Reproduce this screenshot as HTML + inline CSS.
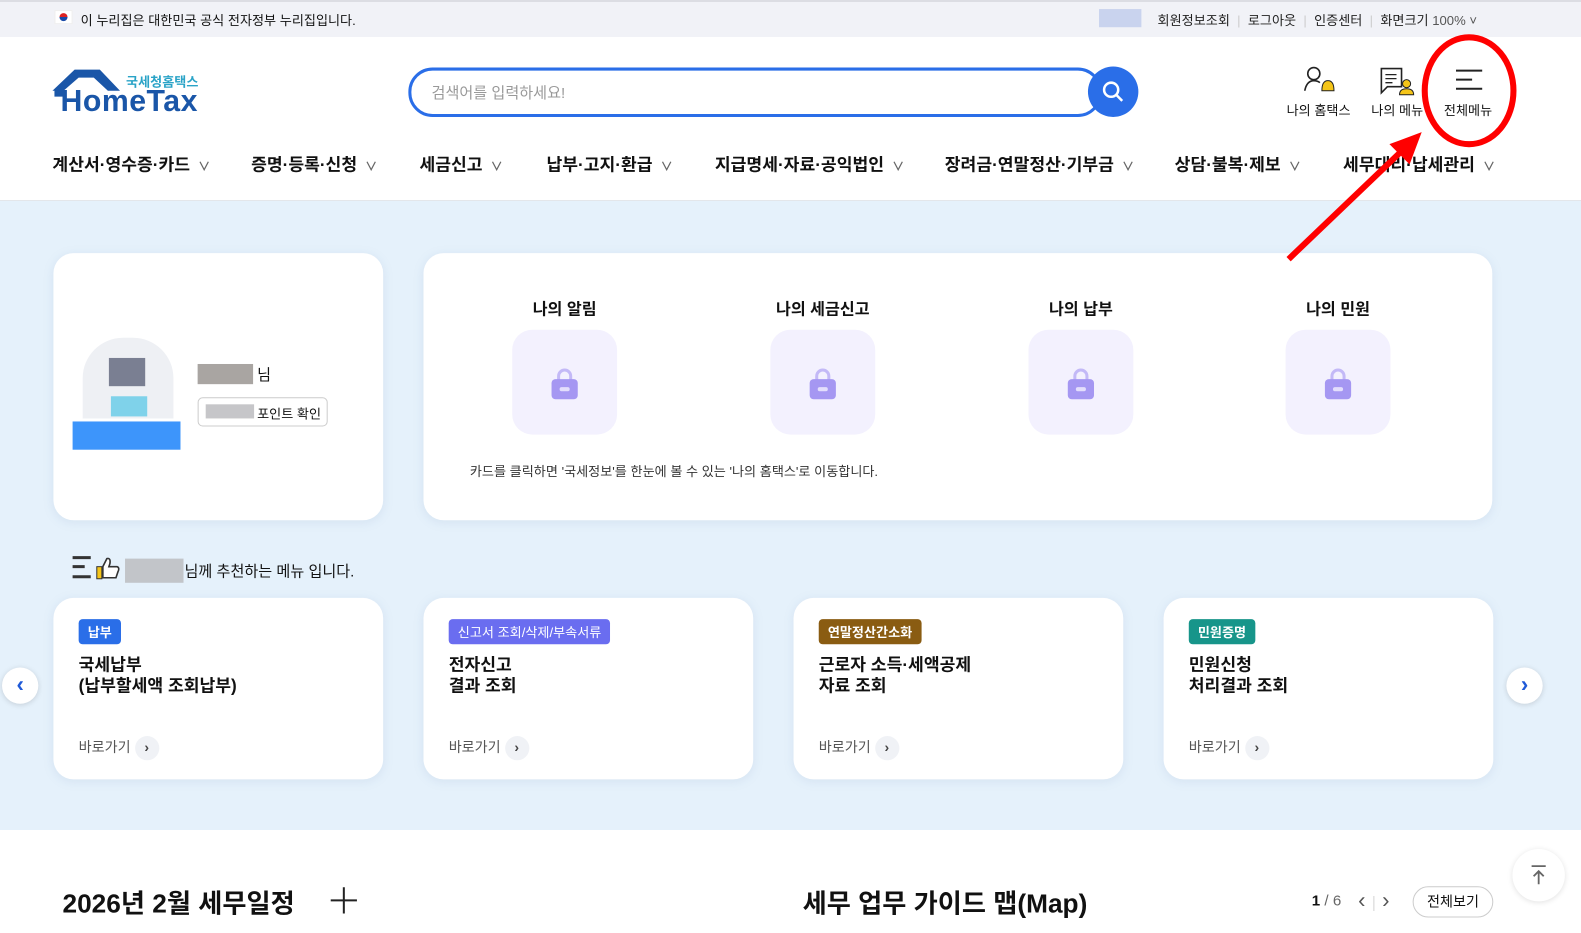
<!DOCTYPE html>
<html><head><meta charset="utf-8"><style>
*{box-sizing:border-box;margin:0;padding:0}
body{width:1581px;height:933px;overflow:hidden;font-family:"Liberation Sans","Noto Sans CJK KR",sans-serif;color:#111;background:#fff;position:relative}
#w{position:absolute;left:0;top:0;width:1568px;height:925px;transform:scale(1.0083);transform-origin:0 0}
.a{position:absolute}
.top{left:0;top:0;width:1581px;height:37px;background:#f1f2f7;border-top:2px solid #dcdde3;font-size:13px}
.nav{font-size:17px;font-weight:bold;top:149px;color:#111}
.nav span{font-size:12px;color:#666;margin-left:8px}
.bg{left:0;top:200px;width:1581px;height:622px;background:#e5f1fb;border-top:1px solid #e3e6ea}
.card{background:#fff;border-radius:20px;box-shadow:0 2px 10px rgba(120,150,190,.15)}
.lk{width:104px;height:104px;border-radius:20px;background:#f3f1fe}
.ttl{font-size:16px;font-weight:bold;text-align:center;width:200px}
.tag{font-size:13px;color:#fff;font-weight:bold;padding:3px 9px;border-radius:4px;top:21px;left:25px}
.rt{font-size:17px;font-weight:bold;top:56px;left:25px;line-height:21px}
.go{font-size:14px;color:#555;top:137px;left:25px}
.go b{display:inline-block;width:24px;height:24px;border-radius:50%;background:#f0f2f6;color:#444;text-align:center;line-height:23px;font-size:14px;margin-left:4px;vertical-align:middle}
.arr{width:36px;height:36px;border-radius:50%;background:#fff;box-shadow:0 1px 6px rgba(0,0,0,.15);color:#1f5ad8;font-size:22px;text-align:center;line-height:34px;font-weight:bold}
</style></head><body>
<div class="a top"></div>
<div class="a" style="left:0;top:200px;width:1581px;height:630px;background:#e5f1fb;border-top:1px solid #e3e6ea"></div>
<div id="w">
<div class="a" style="left:0;top:0;width:1568px;height:37px;font-size:13px">
 <div class="a" style="left:54px;top:10px;width:18px;height:14px;background:#fff;border:1px solid #eee"><div class="a" style="left:4px;top:2px;width:8px;height:8px;border-radius:50%;background:linear-gradient(#d22 50%,#1a4aa8 50%)"></div></div>
 <div class="a" style="left:80px;top:10px">이 누리집은 대한민국 공식 전자정부 누리집입니다.</div>
 <div class="a" style="left:1090px;top:9px;width:42px;height:18px;background:#c9d3ee"></div>
 <div class="a" style="left:1148px;top:10px;color:#222">회원정보조회 <span style="color:#ccc">&nbsp;|&nbsp;</span> 로그아웃 <span style="color:#ccc">&nbsp;|&nbsp;</span> 인증센터 <span style="color:#ccc">&nbsp;|&nbsp;</span> 화면크기 <span style="color:#555">100% ˅</span></div>
</div>
<!-- logo -->
<svg class="a" style="left:51px;top:68px" width="70" height="28" viewBox="0 0 70 28"><path d="M1 22 L23 1 L48 1 L68 22 L56 22 L42 9 L27 9 L12 22 L12 28 L3 28 L3 22 Z" fill="#1a56a8"/></svg>
<div class="a" style="left:125px;top:71px;font-size:13px;font-weight:bold;color:#2aa3c7">국세청홈택스</div>
<div class="a" style="left:60px;top:84px;font-size:30px;font-weight:bold;color:#1a56a8;letter-spacing:0.5px">HomeTax</div>
<!-- search -->
<div class="a" style="left:405px;top:67px;width:688px;height:49px;border:3px solid #2a6ee8;border-radius:24px;padding:11px 20px;font-size:15px;color:#999">검색어를 입력하세요!</div>
<div class="a" style="left:1079px;top:66px;width:50px;height:50px;border-radius:50%;background:#2a6ee8"></div>
<svg class="a" style="left:1092px;top:79px" width="24" height="24" viewBox="0 0 24 24"><circle cx="10" cy="10" r="7" fill="none" stroke="#fff" stroke-width="2.5"/><path d="M15 15 L21 21" stroke="#fff" stroke-width="2.5"/></svg>
<!-- icons -->
<svg class="a" style="left:1292px;top:64px" width="36" height="30" viewBox="0 0 36 30"><circle cx="11" cy="9" r="6" fill="none" stroke="#222" stroke-width="1.6"/><path d="M2 26 Q4 16 11 16 Q15 16 17 18" fill="none" stroke="#222" stroke-width="1.6"/><path d="M19 26 Q19 16 25 16 Q31 16 31 26 Z" fill="#f5c518" stroke="#222" stroke-width="1"/></svg>
<div class="a" style="left:1276px;top:99px;font-size:13px">나의 홈택스</div>
<svg class="a" style="left:1368px;top:66px" width="38" height="30" viewBox="0 0 38 30"><path d="M2 2 H22 V20 H8 L2 26 Z" fill="none" stroke="#222" stroke-width="1.6"/><path d="M6 8 H17 M6 12 H17 M6 16 H13" stroke="#222" stroke-width="1.3"/><circle cx="27" cy="17" r="4" fill="#f5c518" stroke="#222"/><path d="M20 28 Q20 22 27 22 Q34 22 34 28 Z" fill="#f5c518" stroke="#222"/></svg>
<div class="a" style="left:1360px;top:99px;font-size:13px">나의 메뉴</div>
<svg class="a" style="left:1443px;top:68px" width="28" height="22"><path d="M1 2 H27 M1 11 H17 M1 20 H27" stroke="#222" stroke-width="2"/></svg>
<div class="a" style="left:1432px;top:99px;font-size:13px">전체메뉴</div>
<!-- nav -->
<div class="a nav" style="left:52px">계산서·영수증·카드<span>∨</span></div>
<div class="a nav" style="left:249px">증명·등록·신청<span>∨</span></div>
<div class="a nav" style="left:416px">세금신고<span>∨</span></div>
<div class="a nav" style="left:542px">납부·고지·환급<span>∨</span></div>
<div class="a nav" style="left:709px">지급명세·자료·공익법인<span>∨</span></div>
<div class="a nav" style="left:937px">장려금·연말정산·기부금<span>∨</span></div>
<div class="a nav" style="left:1165px">상담·불복·제보<span>∨</span></div>
<div class="a nav" style="left:1332px">세무대리·납세관리<span>∨</span></div>
<!-- profile -->
<div class="a card" style="left:53px;top:251px;width:327px;height:265px"></div>
<div class="a" style="left:82px;top:335px;width:90px;height:80px;border-radius:40px 40px 0 0;background:#eef0f4"></div>
<div class="a" style="left:108px;top:355px;width:36px;height:28px;background:#7a7f92"></div>
<div class="a" style="left:110px;top:393px;width:36px;height:20px;background:#7fd2ea"></div>
<div class="a" style="left:72px;top:418px;width:107px;height:28px;background:#3d95fb"></div>
<div class="a" style="left:196px;top:361px;width:55px;height:20px;background:#a9a5a2"></div>
<div class="a" style="left:255px;top:361px;font-size:15px">님</div>
<div class="a" style="left:196px;top:394px;width:129px;height:29px;border:1px solid #ccc;border-radius:5px;background:#fff;font-size:13px;padding:5px 0 0 58px">포인트 확인</div>
<div class="a" style="left:204px;top:401px;width:48px;height:14px;background:#c6c6c9"></div>
<!-- my card -->
<div class="a card" style="left:420px;top:251px;width:1060px;height:265px"></div>
<div class="a ttl" style="left:460px;top:293px">나의 알림</div>
<div class="a ttl" style="left:716px;top:293px">나의 세금신고</div>
<div class="a ttl" style="left:972px;top:293px">나의 납부</div>
<div class="a ttl" style="left:1227px;top:293px">나의 민원</div>
<div class="a lk" style="left:508px;top:327px"></div>
<div class="a lk" style="left:764px;top:327px"></div>
<div class="a lk" style="left:1020px;top:327px"></div>
<div class="a lk" style="left:1275px;top:327px"></div>
<svg class="a" style="left:545px;top:364px" width="30" height="34"><path d="M9 13 V9 a6 6 0 0 1 12 0 V13" fill="none" stroke="#c3b9f7" stroke-width="3"/><rect x="2" y="12" width="26" height="20" rx="4" fill="#a597f2"/><rect x="10" y="20" width="10" height="4" rx="2" fill="#e3defc"/></svg>
<svg class="a" style="left:801px;top:364px" width="30" height="34"><path d="M9 13 V9 a6 6 0 0 1 12 0 V13" fill="none" stroke="#c3b9f7" stroke-width="3"/><rect x="2" y="12" width="26" height="20" rx="4" fill="#a597f2"/><rect x="10" y="20" width="10" height="4" rx="2" fill="#e3defc"/></svg>
<svg class="a" style="left:1057px;top:364px" width="30" height="34"><path d="M9 13 V9 a6 6 0 0 1 12 0 V13" fill="none" stroke="#c3b9f7" stroke-width="3"/><rect x="2" y="12" width="26" height="20" rx="4" fill="#a597f2"/><rect x="10" y="20" width="10" height="4" rx="2" fill="#e3defc"/></svg>
<svg class="a" style="left:1312px;top:364px" width="30" height="34"><path d="M9 13 V9 a6 6 0 0 1 12 0 V13" fill="none" stroke="#c3b9f7" stroke-width="3"/><rect x="2" y="12" width="26" height="20" rx="4" fill="#a597f2"/><rect x="10" y="20" width="10" height="4" rx="2" fill="#e3defc"/></svg>
<div class="a" style="left:466px;top:457px;font-size:13px;color:#333">카드를 클릭하면 '국세정보'를 한눈에 볼 수 있는 '나의 홈택스'로 이동합니다.</div>
<!-- recommend -->
<svg class="a" style="left:70px;top:550px" width="52" height="26"><path d="M2 3 H20 M2 12 H14 M2 22 H20" stroke="#333" stroke-width="3"/><rect x="26" y="12" width="5" height="12" fill="#f5c518" stroke="#333"/><path d="M32 12 L36 4 Q40 3 39 9 L38 12 H46 Q49 13 47 17 L45 23 H32 Z" fill="#fff" stroke="#333" stroke-width="1.6"/></svg>
<div class="a" style="left:124px;top:554px;width:58px;height:24px;background:#b9babd;opacity:.8"></div>
<div class="a" style="left:183px;top:556px;font-size:15px">님께 추천하는 메뉴 입니다.</div>
<div class="a card" style="left:53px;top:593px;width:327px;height:180px"><div class="a tag" style="background:#2a6ee8">납부</div><div class="a rt">국세납부<br>(납부할세액 조회납부)</div><div class="a go">바로가기<b>›</b></div></div>
<div class="a card" style="left:420px;top:593px;width:327px;height:180px"><div class="a tag" style="background:#6a6df0;font-weight:normal">신고서 조회/삭제/부속서류</div><div class="a rt">전자신고<br>결과 조회</div><div class="a go">바로가기<b>›</b></div></div>
<div class="a card" style="left:787px;top:593px;width:327px;height:180px"><div class="a tag" style="background:#8a5c12">연말정산간소화</div><div class="a rt">근로자 소득·세액공제<br>자료 조회</div><div class="a go">바로가기<b>›</b></div></div>
<div class="a card" style="left:1154px;top:593px;width:327px;height:180px"><div class="a tag" style="background:#17958a">민원증명</div><div class="a rt">민원신청<br>처리결과 조회</div><div class="a go">바로가기<b>›</b></div></div>
<div class="a arr" style="left:2px;top:662px">‹</div>
<div class="a arr" style="left:1494px;top:662px">›</div>
<!-- bottom -->
<div class="a" style="left:62px;top:876px;font-size:26px;font-weight:bold">2026년 2월 세무일정</div>
<svg class="a" style="left:327px;top:879px" width="28" height="28"><path d="M14 1 V27 M1 14 H27" stroke="#222" stroke-width="2"/></svg>
<div class="a" style="left:796px;top:876px;font-size:26px;font-weight:bold">세무 업무 가이드 맵(Map)</div>
<div class="a" style="left:1301px;top:885px;font-size:15px"><b>1</b> <span style="color:#666">/ 6</span></div>
<div class="a" style="left:1347px;top:880px;font-size:22px;color:#555">‹ <span style="color:#ddd;font-size:16px">|</span> ›</div>
<div class="a" style="left:1401px;top:879px;width:80px;height:31px;border:1px solid #ccc;border-radius:16px;font-size:14px;text-align:center;line-height:29px">전체보기</div>
<div class="a" style="left:1500px;top:842px;width:52px;height:52px;border-radius:50%;background:#fff;box-shadow:0 1px 6px rgba(0,0,0,.12)"></div>
<svg class="a" style="left:1516px;top:857px" width="20" height="22"><path d="M3 2 H17 M10 7 V20 M5 12 L10 7 L15 12" fill="none" stroke="#666" stroke-width="1.8"/></svg>
<!-- red annotation -->
<svg class="a" style="left:0;top:0" width="1568" height="925"><ellipse cx="1457" cy="90" rx="44" ry="53" fill="none" stroke="#f00" stroke-width="6"/><path d="M1278 257 L1392 148" stroke="#f00" stroke-width="6"/><path d="M1410 131 L1378 143 L1398 163 Z" fill="#f00"/></svg>
</div>
</body></html>
